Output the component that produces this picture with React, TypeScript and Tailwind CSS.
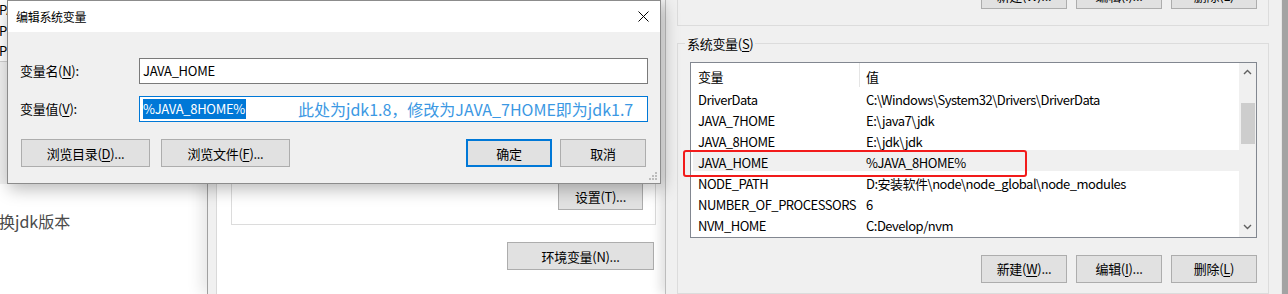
import React from "react";

function Btn({
  children,
  className = "",
}: {
  children: React.ReactNode;
  className?: string;
}) {
  return (
    <div
      className={
        "flex items-center justify-center bg-[#e1e1e1] text-[13px] leading-none text-black shrink-0 " +
        className
      }
    >
      {children}
    </div>
  );
}

function U({ children }: { children: React.ReactNode }) {
  return <span className="underline underline-offset-2">{children}</span>;
}

const rows: [string, string][] = [
  ["DriverData", "C:\\Windows\\System32\\Drivers\\DriverData"],
  ["JAVA_7HOME", "E:\\java7\\jdk"],
  ["JAVA_8HOME", "E:\\jdk\\jdk"],
  ["JAVA_HOME", "%JAVA_8HOME%"],
  ["NODE_PATH", "D:安装软件\\node\\node_global\\node_modules"],
  ["NUMBER_OF_PROCESSORS", "6"],
  ["NVM_HOME", "C:Develop/nvm"],
];

function Chevron({ up }: { up?: boolean }) {
  return (
    <svg width="9" height="6" viewBox="0 0 9 6">
      <polyline
        points={up ? "1,5 4.5,1.5 8,5" : "1,1 4.5,4.5 8,1"}
        fill="none"
        stroke="#606060"
        strokeWidth="1.4"
      />
    </svg>
  );
}

export default function App() {
  return (
    <div className="relative w-[1288px] h-[294px] overflow-hidden bg-white font-['Segoe_UI','Noto_Sans_CJK_SC',sans-serif] text-black tracking-[-0.3px]">
      {/* far-left background window */}
      <div className="absolute left-0 top-0 w-[30px] h-[184px] flex flex-col">
        <div className="h-[62px] bg-white border-b border-[#cfcfcf] -ml-[1px] text-[13px] leading-[20.5px] flex flex-col">
          <span>PA</span>
          <span>PR</span>
          <span>PR</span>
        </div>
        <div className="flex-1 bg-[#f0f0f0]" />
      </div>

      {/* left web page */}
      <div className="absolute left-0 top-[184px] w-[207px] h-[110px] bg-white pt-[27px]">
        <div className="text-[16px] leading-[20px] text-[#4a4a4a] -ml-[1px] tracking-normal">换jdk版本</div>
      </div>

      {/* system properties window (middle) */}
      <div className="absolute left-[207px] top-0 w-[460px] h-[294px] flex bg-[#f0f0f0] border-l border-[#a0a0a0] pl-[8px] shadow-[-6px_0_14px_rgba(0,0,0,0.10)]">
        <div className="flex-1 bg-white border-l border-[#d9d9d9] flex flex-col pl-[14px]">
          <div className="w-[425px] h-[225px] border-x border-b border-[#dcdcdc] flex flex-col justify-end items-end pr-[12px] pb-[14px]">
            <Btn className="w-[85px] h-[27px] border border-[#adadad]">设置(T)...</Btn>
          </div>
          <div className="w-[423px] flex justify-end mt-[17px]">
            <Btn className="w-[147px] h-[28px] border border-[#adadad]">环境变量(N)...</Btn>
          </div>
        </div>
      </div>

      {/* environment variables dialog (right) */}
      <div className="absolute left-[665px] top-0 w-[616px] h-[294px] bg-[#f0f0f0] border-l border-[#bdbdbd] shadow-[-5px_0_10px_rgba(0,0,0,0.12)] flex flex-col pl-[11px]">
        {/* user variables group (bottom part only) */}
        <div className="w-[592px] h-[28px] border-x border-b border-[#dcdcdc] flex justify-end items-start pr-[11px] gap-[9px]">
          <Btn className="w-[86px] h-[27px] -mt-[18px] border border-[#adadad]">新建(W)...</Btn>
          <Btn className="w-[86px] h-[27px] -mt-[18px] border border-[#adadad]">编辑(I)...</Btn>
          <Btn className="w-[86px] h-[27px] -mt-[18px] border border-[#adadad]">删除(L)</Btn>
        </div>

        {/* system variables group */}
        <fieldset className="w-[592px] mt-[10px] h-[280px] border border-[#dcdcdc]">
          <legend className="ml-[7px] px-[2px] text-[13px] leading-[16px]">
            系统变量(<U>S</U>)
          </legend>
          <div className="ml-[12px] mt-[10px] w-[567px] h-[176px] border border-[#828790] bg-white flex">
            <div className="flex-1 flex flex-col text-[13px] tracking-[-0.5px]">
              <div className="h-[24px] flex items-stretch">
                <div className="w-[169px] border-r border-[#e5e5e5] pl-[7px] pt-[4px] flex items-center">变量</div>
                <div className="pl-[6px] pt-[4px] flex items-center">值</div>
              </div>
              {rows.map(([k, v]) => (
                <div
                  key={k}
                  className={
                    "ml-[2px] h-[21px] flex items-center whitespace-nowrap " +
                    (k === "JAVA_HOME" ? "bg-[#f0f0f0]" : "")
                  }
                >
                  <div className="w-[166px] pl-[5px] pt-[4px]">{k}</div>
                  <div className="pl-[7px] pt-[4px]">{v}</div>
                </div>
              ))}
            </div>
            <div className="w-[17px] bg-[#f0f0f0] flex flex-col items-center">
              <div className="h-[17px] flex items-center justify-center mt-[1px]">
                <Chevron up />
              </div>
              <div className="w-[14px] h-[41px] bg-[#cdcdcd] mt-[22px]" />
              <div className="flex-1" />
              <div className="h-[17px] flex items-center justify-center mb-[1px]">
                <Chevron />
              </div>
            </div>
          </div>
          <div className="ml-[12px] w-[567px] flex justify-end gap-[9px] mt-[17px]">
            <Btn className="w-[86px] h-[28px] border border-[#adadad]">
              新建(<U>W</U>)...
            </Btn>
            <Btn className="w-[86px] h-[28px] border border-[#adadad]">
              编辑(<U>I</U>)...
            </Btn>
            <Btn className="w-[86px] h-[28px] border border-[#adadad]">
              删除(<U>L</U>)
            </Btn>
          </div>
        </fieldset>
      </div>
      <div className="absolute left-[1281px] top-0 w-[7px] h-[294px] bg-[#a3a3a3] border-l border-[#e6e6e6]" />

      {/* red annotation box */}
      <div className="absolute left-[683px] top-[150px] w-[344px] h-[27px] border-2 border-[#f21b1b] rounded-[3px]" />

      {/* edit system variable dialog */}
      <div className="absolute left-[7px] top-0 w-[654px] h-[184px] border border-[#8c8c8c] bg-[#f0f0f0] shadow-[2px_5px_16px_rgba(0,0,0,0.28)] flex flex-col">
        <div className="h-[31px] bg-white flex items-center justify-between pl-[8px] pr-[11px]">
          <span className="text-[12px] leading-none">编辑系统变量</span>
          <svg width="11" height="11" viewBox="0 0 11 11">
            <path d="M0.5 0.5 L10.5 10.5 M10.5 0.5 L0.5 10.5" stroke="#000" strokeWidth="1" />
          </svg>
        </div>
        <div className="flex flex-col pl-[12px] text-[13px]">
          <div className="mt-[26px] flex items-center">
            <div className="w-[119px]">
              变量名(<U>N</U>):
            </div>
            <div className="w-[509px] h-[26px] border border-[#7a7a7a] bg-white pl-[3px] flex items-center">
              JAVA_HOME
            </div>
          </div>
          <div className="mt-[12px] flex items-center">
            <div className="w-[119px]">
              变量值(<U>V</U>):
            </div>
            <div className="w-[509px] h-[26px] border border-[#0078d7] bg-white pl-[3px] flex items-center whitespace-nowrap">
              <span className="bg-[#0078d7] text-white h-[20px] flex items-center pr-[1px]">%JAVA_8HOME%</span>
              <span className="ml-[52px] text-[16px] leading-none text-[#3b98e3] tracking-normal">
                此处为jdk1.8，修改为JAVA_7HOME即为jdk1.7
              </span>
            </div>
          </div>
          <div className="mt-[17px] ml-[1px] w-[625px] flex justify-between">
            <div className="flex gap-[11px]">
              <Btn className="w-[129px] h-[28px] border border-[#adadad]">
                浏览目录(<U>D</U>)...
              </Btn>
              <Btn className="w-[129px] h-[28px] border border-[#adadad]">
                浏览文件(<U>F</U>)...
              </Btn>
            </div>
            <div className="flex gap-[8px]">
              <Btn className="w-[86px] h-[28px] border-2 border-[#0078d7]">确定</Btn>
              <Btn className="w-[86px] h-[28px] border border-[#adadad]">取消</Btn>
            </div>
          </div>
        </div>
        <svg className="absolute right-[3px] bottom-[3px]" width="8" height="8" viewBox="0 0 8 8">
          <rect x="6" y="0" width="2" height="2" fill="#bdbdbd" />
          <rect x="3" y="3" width="2" height="2" fill="#bdbdbd" />
          <rect x="6" y="3" width="2" height="2" fill="#bdbdbd" />
          <rect x="0" y="6" width="2" height="2" fill="#bdbdbd" />
          <rect x="3" y="6" width="2" height="2" fill="#bdbdbd" />
          <rect x="6" y="6" width="2" height="2" fill="#bdbdbd" />
        </svg>
      </div>
    </div>
  );
}
